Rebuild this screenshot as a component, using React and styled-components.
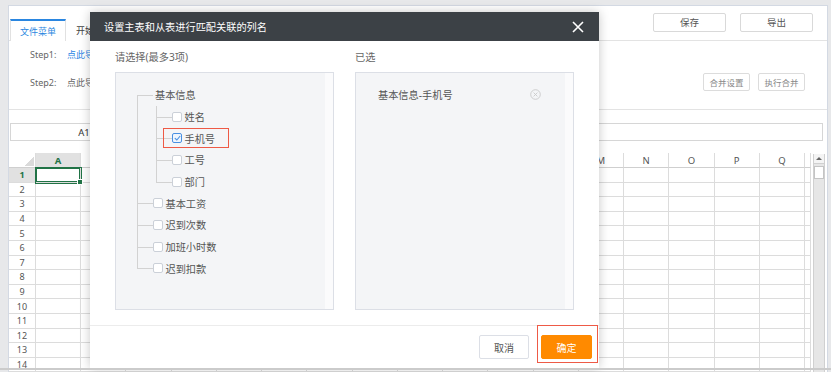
import React from 'react';
import styled, { createGlobalStyle, css } from 'styled-components';

const GlobalStyle = createGlobalStyle`
  html, body { margin: 0; padding: 0; }
  body {
    background: #e7e8ea;
    font-family: "Noto Sans", "Noto Sans CJK SC", sans-serif;
    overflow: hidden;
    width: 831px;
    height: 372px;
  }
  * { box-sizing: border-box; }
`;

const Page = styled.div`
  position: relative;
  width: 831px;
  height: 372px;
  padding: 5px 3px 0 8px;
  overflow: hidden;
`;

const AppFrame = styled.div`
  background: #fff;
  border: 1px solid #d3d9e3;
  height: 380px;
  display: flex;
  flex-direction: column;
  overflow: hidden;
`;

const TopBar = styled.div`
  height: 35px;
  flex: none;
  display: flex;
  align-items: center;
  padding: 0 14px 0 1px;
  border-bottom: 1px solid #e3e3e3;
`;

const Tab = styled.div`
  align-self: flex-end;
  height: 22px;
  margin-bottom: -1px;
  padding: 0 ${(p) => (p.$active ? '9px' : '10px')};
  display: flex;
  align-items: center;
  font-size: 9px;
  color: ${(p) => (p.$active ? '#2a86e0' : '#444')};
  background: #fff;
  ${(p) =>
    p.$active &&
    css`
      border-top: 2px solid #2a86e0;
      border-left: 1px solid #e1e1e1;
      border-right: 1px solid #e1e1e1;
    `}
`;

const TopButtons = styled.div`
  margin-left: auto;
  display: flex;
  gap: 14px;
  margin-bottom: 2px;
`;

const TopButton = styled.button`
  width: 73px;
  height: 19px;
  border: 1px solid #d9d9d9;
  border-radius: 2px;
  background: #fff;
  color: #555;
  font-family: inherit;
  font-size: 9.5px;
  padding: 0;
`;

const StepsSection = styled.div`
  height: 69px;
  flex: none;
  padding: 4px 22px 0 21px;
  border-bottom: 1px solid #e3e3e3;
  display: flex;
  flex-direction: column;
  gap: 10px;
`;

const StepRow = styled.div`
  height: 18px;
  display: flex;
  align-items: center;
  font-size: 9px;
`;

const StepLabel = styled.span`
  width: 37px;
  color: #666;
`;

const StepLink = styled.span`
  color: ${(p) => (p.$muted ? '#666' : '#2b85e4')};
`;

const SmallButtons = styled.div`
  margin-left: auto;
  display: flex;
  gap: 8px;
`;

const SmallButton = styled.button`
  width: 47px;
  height: 18px;
  border: 1px solid #dcdcdc;
  border-radius: 2px;
  background: #fff;
  color: #888;
  font-family: inherit;
  font-size: 8.5px;
  padding: 0;
`;

const FormulaArea = styled.div`
  flex: none;
  padding: 13px 4px 12px 1px;
`;

const FormulaBox = styled.div`
  height: 18px;
  border: 1px solid #d6d6d6;
  display: flex;
`;

const NameBox = styled.div`
  width: 147px;
  border-right: 1px solid #d6d6d6;
  display: flex;
  align-items: center;
  justify-content: center;
  font-size: 9.5px;
  color: #333;
`;

const GridArea = styled.div`
  flex: 1;
  display: flex;
  overflow: hidden;
`;

const SheetGrid = styled.div`
  display: grid;
  grid-template-columns: 27px repeat(17, 45.24px) 6px;
  grid-template-rows: 15px;
  grid-auto-rows: 14.6px;
  align-content: start;
`;

const Cell = styled.div`
  position: relative;
  border-right: 1px solid #dcdcdc;
  border-bottom: 1px solid #dcdcdc;
  display: flex;
  align-items: center;
  justify-content: center;
  font-size: 9px;
  color: #555;
  background: #fff;
  ${(p) =>
    p.$kind === 'colHead' &&
    css`
      border-bottom-color: #cfcfcf;
      font-size: 9.5px;
    `}
  ${(p) =>
    p.$kind === 'corner' &&
    css`
      border-bottom-color: #cfcfcf;
      &::before {
        content: '';
        position: absolute;
        right: 1px;
        bottom: 1px;
        width: 10px;
        height: 10px;
        background: linear-gradient(to bottom right, transparent 50%, #dadada 50%);
      }
    `}
  ${(p) =>
    p.$active &&
    (p.$kind === 'cell'
      ? css`
          z-index: 1;
          box-shadow: 0 0 0 1px #217346, inset 0 0 0 1px #217346;
          &::after {
            content: '';
            position: absolute;
            right: -3px;
            bottom: -3px;
            width: 4px;
            height: 4px;
            background: #217346;
            border: 1px solid #fff;
          }
        `
      : css`
          background: #e1e1e1;
          color: #217346;
          font-weight: 700;
        `)}
`;

const VScroll = styled.div`
  margin-left: 2px;
  width: 12px;
  margin-top: 1px;
  background: #e6e6e6;
  border-left: 1px solid #d0d0d0;
  border-right: 1px solid #d0d0d0;
  display: flex;
  flex-direction: column;
  align-items: stretch;
`;

const ScrollUp = styled.div`
  height: 10px;
  background: #f4f4f4;
  border-bottom: 1px solid #d0d0d0;
  display: flex;
  align-items: center;
  justify-content: center;
  &::before {
    content: '';
    border-left: 3px solid transparent;
    border-right: 3px solid transparent;
    border-bottom: 3px solid #666;
  }
`;

const ScrollThumb = styled.div`
  margin-top: 2px;
  height: 13px;
  background: #fff;
  border: 1px solid #c4c4c4;
`;

const BottomRule = styled.div`
  position: fixed;
  left: 0;
  right: 0;
  top: 368px;
  height: 1.5px;
  background: #cbcbcb;
  z-index: 20;
`;

/* ---------- modal ---------- */

const Modal = styled.div`
  position: absolute;
  top: 12px;
  left: 90px;
  width: 509px;
  height: 356px;
  background: #fff;
  box-shadow: 0 0 10px rgba(0, 0, 0, 0.22);
  display: flex;
  flex-direction: column;
  z-index: 10;
`;

const ModalHeader = styled.div`
  height: 29px;
  flex: none;
  background: #3c4146;
  display: flex;
  align-items: center;
  justify-content: space-between;
  padding: 0 15px 0 14px;
  color: #fff;
  font-size: 10.2px;
`;

const ModalBody = styled.div`
  flex: 1;
  padding: 10px 25px 15px;
  display: grid;
  grid-template-columns: 219px 219px;
  grid-template-rows: 12px 238px;
  column-gap: 21px;
  row-gap: 9px;
`;

const SectionLabel = styled.div`
  font-size: 10.2px;
  line-height: 12px;
  color: #666;
`;

const Panel = styled.div`
  border: 1px solid #dcdfe6;
  background: #f4f5f7;
  display: flex;
`;

const PanelContent = styled.div`
  flex: 1;
  padding-top: 11px;
`;

const PanelStrip = styled.div`
  width: 8px;
  background: #fbfbfc;
`;

const TreeList = styled.ul`
  list-style: none;
  margin: 0 0 0 ${(p) => (p.$root ? '21px' : '3px')};
  padding: 0 0 0 16px;
`;

const ROW = 21.7;

const TreeItem = styled.li`
  position: relative;
  &::before {
    content: '';
    position: absolute;
    left: -16px;
    top: ${ROW / 2}px;
    width: 16px;
    border-top: 1px solid #d2d2d2;
  }
  &::after {
    content: '';
    position: absolute;
    left: -16px;
    top: ${(p) => (p.$first && p.$root ? `${ROW / 2}px` : '0')};
    ${(p) => (p.$last ? `height: ${ROW / 2 - (p.$first && p.$root ? ROW / 2 : 0)}px;` : 'bottom: 0;')}
    border-left: 1px solid #d2d2d2;
  }
`;

const TreeLabel = styled.div`
  position: relative;
  height: ${ROW}px;
  display: flex;
  align-items: center;
  gap: 2.5px;
  font-size: 10.2px;
  color: #555;
  padding-left: ${(p) => (p.$plain ? '2px' : '0')};
`;

const Box = styled.span`
  width: 10px;
  height: 10px;
  flex: none;
  border: 1px solid ${(p) => (p.$checked ? '#4a90e2' : '#cbd0d8')};
  border-radius: 2px;
  background: ${(p) => (p.$checked ? '#eef5fd' : '#fff')};
  display: flex;
  align-items: center;
  justify-content: center;
`;

const Highlight = styled.span`
  position: absolute;
  left: -9px;
  top: 0.7px;
  width: 66px;
  height: 20px;
  border: 1.5px solid #ee5a46;
  pointer-events: none;
`;

const SelectedItem = styled.div`
  height: ${ROW}px;
  display: flex;
  align-items: center;
  justify-content: space-between;
  padding: 0 24px 0 22px;
  font-size: 10.2px;
  color: #555;
`;

const ModalFooter = styled.div`
  height: 43px;
  flex: none;
  border-top: 1px solid #ececec;
  display: flex;
  align-items: center;
  justify-content: flex-end;
  gap: 12px;
  padding-right: 7px;
`;

const FooterButton = styled.button`
  width: ${(p) => (p.$primary ? '51px' : '50px')};
  height: 24px;
  border-radius: 2px;
  border: 1px solid ${(p) => (p.$primary ? '#ff8a00' : '#dcdfe6')};
  background: ${(p) => (p.$primary ? '#ff8a00' : '#fff')};
  color: ${(p) => (p.$primary ? '#fff' : '#555')};
  font-family: inherit;
  font-size: 10px;
  padding: 0;
`;

const ButtonMark = styled.div`
  position: relative;
  display: flex;
`;

const ButtonHighlight = styled.span`
  position: absolute;
  left: -4px;
  top: -10px;
  width: 61px;
  height: 38px;
  border: 1.5px solid #ee5a46;
  pointer-events: none;
`;

const COLS = 'ABCDEFGHIJKLMNOPQ'.split('');
const ROWS = Array.from({ length: 15 }, (_, i) => i + 1);

const CheckMark = () => (
  <svg width="7" height="6" viewBox="0 0 7 6">
    <path d="M0.8 3.1 L2.8 5 L6.2 1" fill="none" stroke="#4a90e2" strokeWidth="1.1" />
  </svg>
);

const Checkbox = ({ checked }) => <Box $checked={checked}>{checked && <CheckMark />}</Box>;

const CloseIcon = () => (
  <svg width="12" height="12" viewBox="0 0 12 12">
    <path d="M1 1 L11 11 M11 1 L1 11" stroke="#fff" strokeWidth="1.6" />
  </svg>
);

const RemoveIcon = () => (
  <svg width="11" height="11" viewBox="0 0 11 11">
    <circle cx="5.5" cy="5.5" r="4.8" fill="none" stroke="#c9c9c9" strokeWidth="0.9" />
    <path d="M3.6 3.6 L7.4 7.4 M7.4 3.6 L3.6 7.4" stroke="#c9c9c9" strokeWidth="0.9" />
  </svg>
);

const children = [
  { label: '姓名' },
  { label: '手机号', checked: true, mark: true },
  { label: '工号' },
  { label: '部门' },
];

const roots = ['基本工资', '迟到次数', '加班小时数', '迟到扣款'];

export default function App() {
  return (
    <>
      <GlobalStyle />
      <Page>
        <AppFrame>
          <TopBar>
            <Tab $active>文件菜单</Tab>
            <Tab>开始</Tab>
            <TopButtons>
              <TopButton>保存</TopButton>
              <TopButton>导出</TopButton>
            </TopButtons>
          </TopBar>
          <StepsSection>
            <StepRow>
              <StepLabel>Step1:</StepLabel>
              <StepLink>点此导入主表</StepLink>
            </StepRow>
            <StepRow>
              <StepLabel>Step2:</StepLabel>
              <StepLink $muted>点此导入从表</StepLink>
              <SmallButtons>
                <SmallButton>合并设置</SmallButton>
                <SmallButton>执行合并</SmallButton>
              </SmallButtons>
            </StepRow>
          </StepsSection>
          <FormulaArea>
            <FormulaBox>
              <NameBox>A1</NameBox>
            </FormulaBox>
          </FormulaArea>
          <GridArea>
            <SheetGrid>
              <Cell $kind="corner" />
              {COLS.map((c) => (
                <Cell key={c} $kind="colHead" $active={c === 'A'}>
                  {c}
                </Cell>
              ))}
              <Cell $kind="colHead" />
              {ROWS.map((r) => (
                <React.Fragment key={r}>
                  <Cell $kind="rowHead" $active={r === 1}>
                    {r}
                  </Cell>
                  {COLS.map((c) => (
                    <Cell key={c} $kind="cell" $active={r === 1 && c === 'A'} />
                  ))}
                  <Cell $kind="cell" />
                </React.Fragment>
              ))}
            </SheetGrid>
            <VScroll>
              <ScrollUp />
              <ScrollThumb />
            </VScroll>
          </GridArea>
        </AppFrame>

        <Modal>
          <ModalHeader>
            <span>设置主表和从表进行匹配关联的列名</span>
            <CloseIcon />
          </ModalHeader>
          <ModalBody>
            <SectionLabel>请选择(最多3项)</SectionLabel>
            <SectionLabel>已选</SectionLabel>
            <Panel>
              <PanelContent>
                <TreeList $root>
                  <TreeItem $root $first>
                    <TreeLabel $plain>基本信息</TreeLabel>
                    <TreeList>
                      {children.map((c, i) => (
                        <TreeItem key={c.label} $first={i === 0} $last={i === children.length - 1}>
                          <TreeLabel>
                            <Checkbox checked={c.checked} />
                            {c.label}
                            {c.mark && <Highlight />}
                          </TreeLabel>
                        </TreeItem>
                      ))}
                    </TreeList>
                  </TreeItem>
                  {roots.map((label, i) => (
                    <TreeItem key={label} $root $last={i === roots.length - 1}>
                      <TreeLabel>
                        <Checkbox />
                        {label}
                      </TreeLabel>
                    </TreeItem>
                  ))}
                </TreeList>
              </PanelContent>
              <PanelStrip />
            </Panel>
            <Panel>
              <PanelContent>
                <SelectedItem>
                  <span>基本信息-手机号</span>
                  <RemoveIcon />
                </SelectedItem>
              </PanelContent>
              <PanelStrip />
            </Panel>
          </ModalBody>
          <ModalFooter>
            <FooterButton>取消</FooterButton>
            <ButtonMark>
              <FooterButton $primary>确定</FooterButton>
              <ButtonHighlight />
            </ButtonMark>
          </ModalFooter>
        </Modal>
        <BottomRule />
      </Page>
    </>
  );
}
